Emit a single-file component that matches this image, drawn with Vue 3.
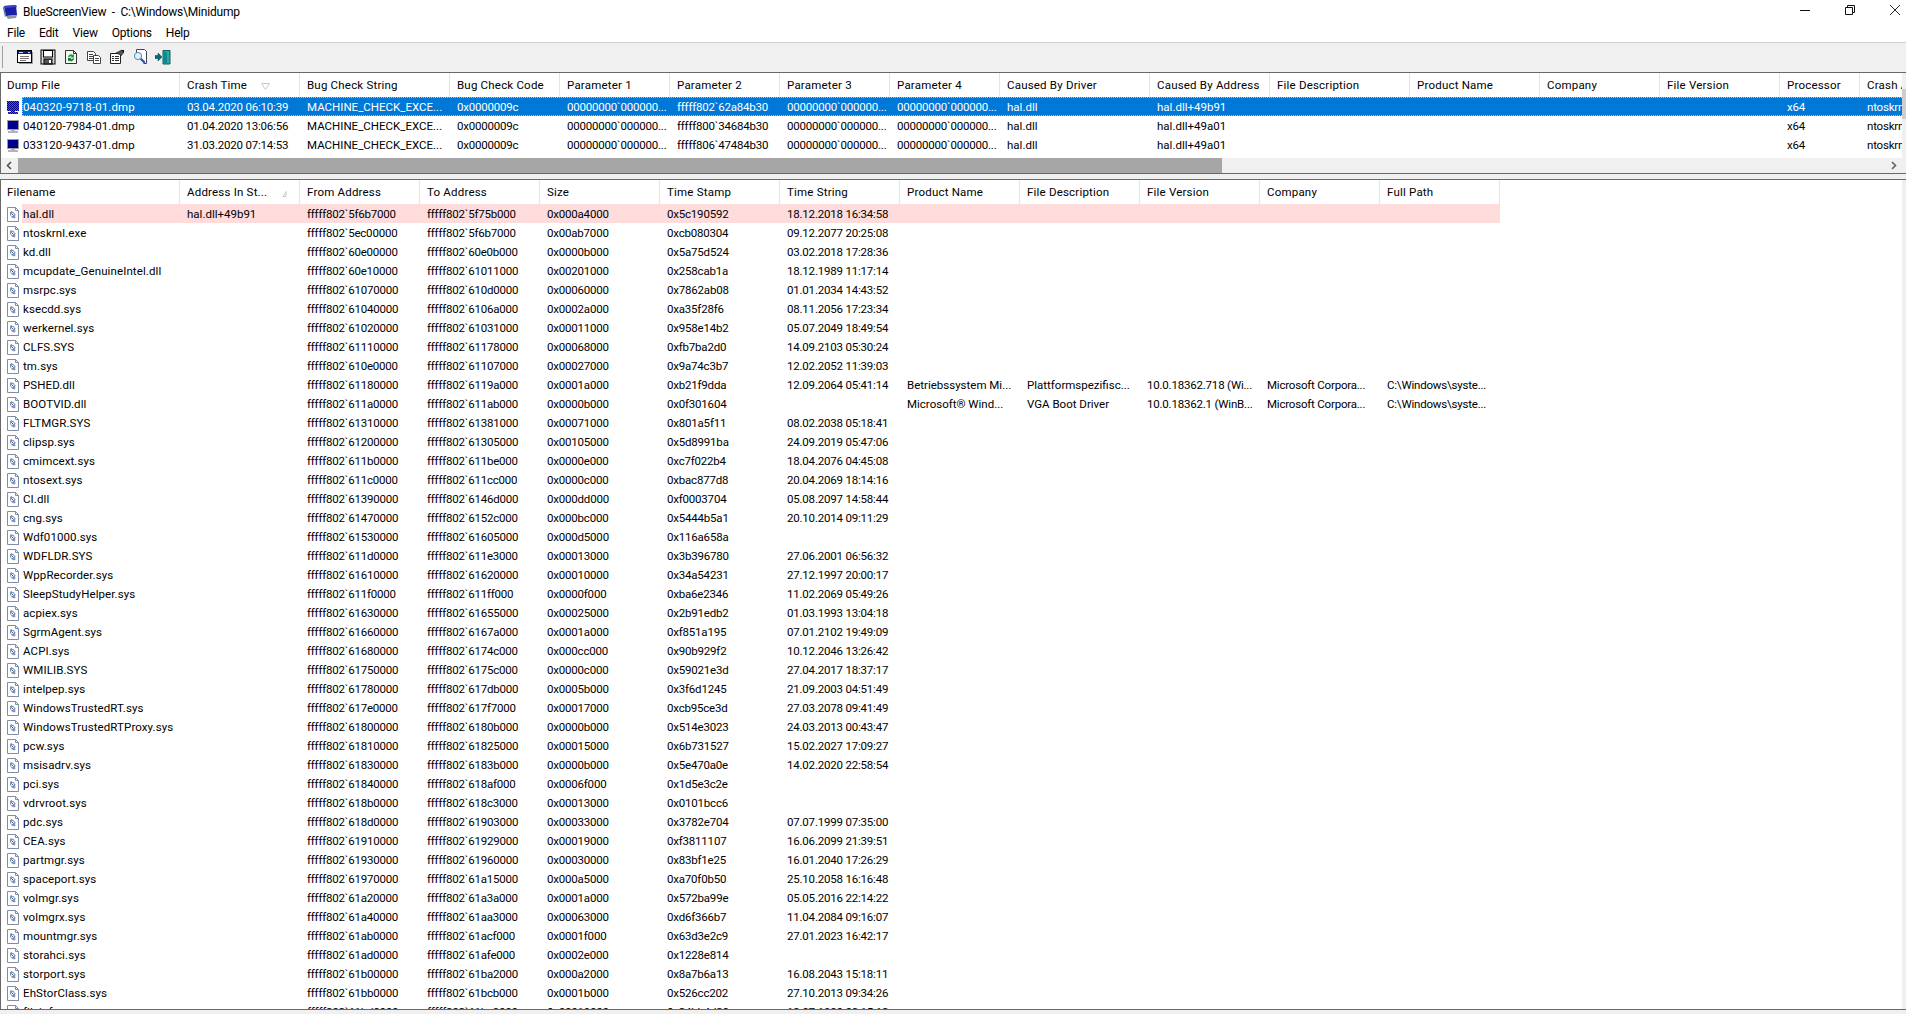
<script setup>
const topCols = ['Dump File','Crash Time','Bug Check String','Bug Check Code','Parameter 1','Parameter 2','Parameter 3','Parameter 4','Caused By Driver','Caused By Address','File Description','Product Name','Company','File Version','Processor','Crash Address']
const botCols = ['Filename','Address In St...','From Address','To Address','Size','Time Stamp','Time String','Product Name','File Description','File Version','Company','Full Path']
const P = '00000000`000000...'
const dumps = [
  ['040320-9718-01.dmp','03.04.2020 06:10:39','fffff802`62a84b30','hal.dll+49b91'],
  ['040120-7984-01.dmp','01.04.2020 13:06:56','fffff800`34684b30','hal.dll+49a01'],
  ['033120-9437-01.dmp','31.03.2020 07:14:53','fffff806`47484b30','hal.dll+49a01'],
].map(d => [d[0],d[1],'MACHINE_CHECK_EXCE...','0x0000009c',P,d[2],P,P,'hal.dll',d[3],'','','','','x64','ntoskrnl.exe+1c1510'])
const raw = `hal.dll|5f6b7000|5f75b000|0x000a4000|0x5c190592|18.12.2018 16:34:58
ntoskrnl.exe|5ec00000|5f6b7000|0x00ab7000|0xcb080304|09.12.2077 20:25:08
kd.dll|60e00000|60e0b000|0x0000b000|0x5a75d524|03.02.2018 17:28:36
mcupdate_GenuineIntel.dll|60e10000|61011000|0x00201000|0x258cab1a|18.12.1989 11:17:14
msrpc.sys|61070000|610d0000|0x00060000|0x7862ab08|01.01.2034 14:43:52
ksecdd.sys|61040000|6106a000|0x0002a000|0xa35f28f6|08.11.2056 17:23:34
werkernel.sys|61020000|61031000|0x00011000|0x958e14b2|05.07.2049 18:49:54
CLFS.SYS|61110000|61178000|0x00068000|0xfb7ba2d0|14.09.2103 05:30:24
tm.sys|610e0000|61107000|0x00027000|0x9a74c3b7|12.02.2052 11:39:03
PSHED.dll|61180000|6119a000|0x0001a000|0xb21f9dda|12.09.2064 05:41:14|Betriebssystem Mi...|Plattformspezifisc...|10.0.18362.718 (Wi...|Microsoft Corpora...|C:\\Windows\\syste...
BOOTVID.dll|611a0000|611ab000|0x0000b000|0x0f301604||Microsoft® Wind...|VGA Boot Driver|10.0.18362.1 (WinB...|Microsoft Corpora...|C:\\Windows\\syste...
FLTMGR.SYS|61310000|61381000|0x00071000|0x801a5f11|08.02.2038 05:18:41
clipsp.sys|61200000|61305000|0x00105000|0x5d8991ba|24.09.2019 05:47:06
cmimcext.sys|611b0000|611be000|0x0000e000|0xc7f022b4|18.04.2076 04:45:08
ntosext.sys|611c0000|611cc000|0x0000c000|0xbac877d8|20.04.2069 18:14:16
CI.dll|61390000|6146d000|0x000dd000|0xf0003704|05.08.2097 14:58:44
cng.sys|61470000|6152c000|0x000bc000|0x5444b5a1|20.10.2014 09:11:29
Wdf01000.sys|61530000|61605000|0x000d5000|0x116a658a|
WDFLDR.SYS|611d0000|611e3000|0x00013000|0x3b396780|27.06.2001 06:56:32
WppRecorder.sys|61610000|61620000|0x00010000|0x34a54231|27.12.1997 20:00:17
SleepStudyHelper.sys|611f0000|611ff000|0x0000f000|0xba6e2346|11.02.2069 05:49:26
acpiex.sys|61630000|61655000|0x00025000|0x2b91edb2|01.03.1993 13:04:18
SgrmAgent.sys|61660000|6167a000|0x0001a000|0xf851a195|07.01.2102 19:49:09
ACPI.sys|61680000|6174c000|0x000cc000|0x90b929f2|10.12.2046 13:26:42
WMILIB.SYS|61750000|6175c000|0x0000c000|0x59021e3d|27.04.2017 18:37:17
intelpep.sys|61780000|617db000|0x0005b000|0x3f6d1245|21.09.2003 04:51:49
WindowsTrustedRT.sys|617e0000|617f7000|0x00017000|0xcb95ce3d|27.03.2078 09:41:49
WindowsTrustedRTProxy.sys|61800000|6180b000|0x0000b000|0x514e3023|24.03.2013 00:43:47
pcw.sys|61810000|61825000|0x00015000|0x6b731527|15.02.2027 17:09:27
msisadrv.sys|61830000|6183b000|0x0000b000|0x5e470a0e|14.02.2020 22:58:54
pci.sys|61840000|618af000|0x0006f000|0x1d5e3c2e|
vdrvroot.sys|618b0000|618c3000|0x00013000|0x0101bcc6|
pdc.sys|618d0000|61903000|0x00033000|0x3782e704|07.07.1999 07:35:00
CEA.sys|61910000|61929000|0x00019000|0xf3811107|16.06.2099 21:39:51
partmgr.sys|61930000|61960000|0x00030000|0x83bf1e25|16.01.2040 17:26:29
spaceport.sys|61970000|61a15000|0x000a5000|0xa70f0b50|25.10.2058 16:16:48
volmgr.sys|61a20000|61a3a000|0x0001a000|0x572ba99e|05.05.2016 22:14:22
volmgrx.sys|61a40000|61aa3000|0x00063000|0xd6f366b7|11.04.2084 09:16:07
mountmgr.sys|61ab0000|61acf000|0x0001f000|0x63d3e2c9|27.01.2023 16:42:17
storahci.sys|61ad0000|61afe000|0x0002e000|0x1228e814|
storport.sys|61b00000|61ba2000|0x000a2000|0x8a7b6a13|16.08.2043 15:18:11
EhStorClass.sys|61bb0000|61bcb000|0x0001b000|0x526cc202|27.10.2013 09:34:26
fileinfo.sys|61bd0000|61be9000|0x00019000|0x34bb4d30|13.07.1980 02:15:12`
const modules = raw.split('\n').map((line, i) => {
  const f = line.split('|')
  return [f[0], i === 0 ? 'hal.dll+49b91' : '', 'fffff802`' + f[1], 'fffff802`' + f[2], f[3], f[4], f[5] || '', f[6] || '', f[7] || '', f[8] || '', f[9] || '', f[10] || '']
})
</script>

<template>
  <div class="app">
    <header class="title">
      <svg class="appicon" width="15" height="15" viewBox="0 0 15 15">
        <path d="M1 1 L13 0 L14 10 L3 11 Z" fill="#1a1fa8" />
        <path d="M1 1 L13 0 L14 2 L2 3 Z" fill="#3b44c9" />
        <path d="M3 11 L14 10 L13 13 L5 14 Z" fill="#8f93a8" />
        <path d="M0 3 L1 1 L3 11 L2 12 Z" fill="#5d6290" />
      </svg>
      <span class="title-text">BlueScreenView&nbsp; -&nbsp; C:\Windows\Minidump</span>
      <div class="winbtns">
        <svg width="10" height="10" viewBox="0 0 10 10"><path d="M0 5.500H10" stroke="#111" /></svg>
        <svg width="10" height="10" viewBox="0 0 10 10"><path d="M.5 2.500h7v7h-7zM2.500 2.500v-2h7v7h-2" fill="none" stroke="#111" /></svg>
        <svg width="10" height="10" viewBox="0 0 10 10"><path d="M0 0L10 10M10 0L0 10" stroke="#111" stroke-width=".9" /></svg>
      </div>
    </header>
    <nav class="menu">
      <span>File</span><span>Edit</span><span>View</span><span>Options</span><span>Help</span>
    </nav>
    <div class="toolbar">
      <i class="grip"></i>
      <svg width="16" height="16" viewBox="0 0 16 16">
        <rect x=".5" y="1.500" width="14" height="12" fill="#fff" stroke="#000" />
        <rect x="1" y="2" width="13" height="3" fill="#0a1f7a" />
        <path d="M2 3.500h4M11 3.500h2" stroke="#cfd6ff" />
        <path d="M3 7.500h9M3 9.500h9M3 11.500h6" stroke="#777" />
        <path d="M15.500 3v11.500H2" stroke="#999" fill="none" />
      </svg>
      <svg width="16" height="16" viewBox="0 0 16 16">
        <rect x="1" y="1" width="14" height="14" fill="#d8d8d8" stroke="#000" />
        <rect x="3.500" y="1.500" width="9" height="6.500" fill="#fff" stroke="#000" />
        <rect x="4" y="10" width="8" height="5" fill="#555" stroke="#000" />
        <rect x="9" y="11" width="2" height="3" fill="#fff" />
      </svg>
      <svg width="16" height="16" viewBox="0 0 16 16">
        <path d="M2.500 1.500h8l3 3v10h-11z" fill="#f4f8f2" stroke="#333" />
        <path d="M10.500 1.500v3h3" fill="none" stroke="#333" />
        <path d="M5 8a3 3 0 0 1 5-2l1-1v3.500H7.500l1-1a2 2 0 0 0-2.500 1z" fill="#1f9a3a" />
        <path d="M11 9.500a3 3 0 0 1-5 2l-1 1V9h3.500l-1 1a2 2 0 0 0 2.500-1z" fill="#14752a" />
      </svg>
      <svg width="16" height="16" viewBox="0 0 16 16">
        <path d="M1.500 2.500h6l2 2v7h-8z" fill="#fff" stroke="#444" />
        <path d="M3 5.500h4M3 7.500h5M3 9.500h4" stroke="#444" />
        <path d="M7.500 6.500h5l2 2v6h-7z" fill="#fff" stroke="#444" />
        <path d="M9 9.500h4M9 11.500h4" stroke="#444" />
      </svg>
      <svg width="16" height="16" viewBox="0 0 16 16">
        <path d="M1.500 4.500h10v10h-10z" fill="#fff" stroke="#222" />
        <path d="M3 7.500h2M6 7.500h4M3 9.500h2M6 9.500h4M3 11.500h2M6 11.500h4" stroke="#333" />
        <path d="M7 4L13 1l2 2-3 4-1.500-1.500z" fill="#555" stroke="#111" stroke-width=".6" />
        <path d="M12 1h3v3z" fill="#111" />
      </svg>
      <svg width="16" height="16" viewBox="0 0 16 16">
        <path d="M4.500 .5h8l2 2v12h-3" fill="#fff" stroke="#445" />
        <path d="M4.500 .5v4" stroke="#445" />
        <circle cx="6" cy="7" r="3.600" fill="#dff1fb" stroke="#5b87a8" />
        <path d="M8.800 9.800l4 4" stroke="#2b4fc7" stroke-width="2.200" />
      </svg>
      <svg width="16" height="16" viewBox="0 0 16 16">
        <path d="M8 1.500h7v13.500H8z" fill="#2aa8a8" stroke="#0d5f62" />
        <path d="M8 2l4 2v11l-4-1z" fill="#0b8a8f" />
        <path d="M0 6.500h3V4l4 4-4 4V9.500H0z" fill="#0a6a70" stroke="#053f44" stroke-width=".5" />
      </svg>
    </div>

    <section class="panel panel-top">
      <div class="pane-inner">
        <div class="list">
          <div class="head top-grid">
            <div v-for="(c, i) in topCols" :key="c" class="hcell">
              <span>{{ c }}</span>
              <svg v-if="i === 1" class="sort" width="9" height="7" viewBox="0 0 9 7"><path d="M.5.5h8L4.500 6.500z" fill="none" stroke="#c8c8c8" /></svg>
            </div>
          </div>
          <div v-for="(d, r) in dumps" :key="d[0]" class="row">
            <div class="ic">
              <svg width="13" height="15" viewBox="0 0 13 15">
                <defs>
                  <pattern id="dither" width="2" height="2" patternUnits="userSpaceOnUse">
                    <rect width="2" height="2" fill="#00008b" />
                    <rect width="1" height="1" fill="#0078d7" />
                    <rect x="1" y="1" width="1" height="1" fill="#0078d7" />
                  </pattern>
                </defs>
                <rect x="0" y="1" width="12" height="10" :fill="r === 0 ? 'url(#dither)' : '#9a9aa2'" />
                <rect x="1" y="2" width="10" height="8" :fill="r === 0 ? 'url(#dither)' : '#00008b'" />
                <path d="M4 11h4v1H4zM1 12h10v2H1z" :fill="r === 0 ? 'url(#dither)' : '#b4b4b8'" />
              </svg>
            </div>
            <div class="body top-body" :class="{ sel: r === 0 }">
              <div v-for="(v, c) in d" :key="c" class="cell">{{ v }}</div>
            </div>
          </div>
          <div class="spacer"></div>
          <div class="hscroll">
            <svg class="arr" width="17" height="15" viewBox="0 0 17 15"><path d="M10 4L6.500 7.500 10 11" fill="none" stroke="#505050" stroke-width="1.600" /></svg>
            <div class="thumb"></div>
            <div class="track"></div>
            <svg class="arr" width="17" height="15" viewBox="0 0 17 15"><path d="M7 4l3.500 3.500L7 11" fill="none" stroke="#606060" stroke-width="1.600" /></svg>
          </div>
        </div>
        <div class="vstrip"><div class="vhead"></div><div class="vthumb"></div></div>
      </div>
    </section>

    <section class="panel panel-bot">
      <div class="pane-inner">
        <div class="list">
          <div class="head bot-grid">
            <div v-for="(c, i) in botCols" :key="c" class="hcell">
              <span>{{ c }}</span>
              <svg v-if="i === 1" class="sort sort2" width="5" height="6" viewBox="0 0 5 6"><path d="M4 .5L1 5.500h3z" fill="none" stroke="#c8c8c8" /></svg>
            </div>
          </div>
          <div v-for="(m, r) in modules" :key="r" class="row">
            <div class="ic">
              <svg width="12" height="15" viewBox="0 0 12 15">
                <path d="M.5.5h8l3 3v11H.5z" fill="#fff" stroke="#7f8ea3" />
                <path d="M8.500.5v3h3" fill="none" stroke="#7f8ea3" />
                <path d="M3 5l1.500-1 1 1 1.500.2.4 1.300 1.300 1L8 9l.6 1.600L7.200 11.500 6 11 4.800 10.500 4 9 3 8z" fill="#7e93b6" />
                <circle cx="5.500" cy="7.500" r="1.500" fill="#fff" />
                <path d="M4.500 6.500l2 2" stroke="#33507e" />
              </svg>
            </div>
            <div class="body bot-body" :class="{ pink: r === 0 }">
              <div v-for="(v, c) in m" :key="c" class="cell">{{ v }}</div>
            </div>
          </div>
        </div>
        <div class="vstrip"></div>
      </div>
    </section>
    <div class="bottom"></div>
  </div>
</template>

<style>
html, body { margin: 0; padding: 0; overflow: hidden; background: #f0f0f0; }
</style>

<style scoped>
.app {
  width: 1906px;
  height: 1014px;
  display: flex;
  flex-direction: column;
  overflow: hidden;
  background: #f0f0f0;
  color: #000;
  font: 11.5px/19px Roboto, "Liberation Sans", sans-serif;
  letter-spacing: -0.2px;
}
.title {
  height: 24px;
  flex: none;
  display: flex;
  align-items: center;
  background: #fff;
}
.appicon { margin-left: 3px; margin-right: 5px; }
.title-text { font-size: 12px; }
.winbtns {
  margin-left: auto;
  display: flex;
  gap: 35px;
  padding-right: 6px;
  margin-top: -4px;
}
.menu {
  height: 18px;
  flex: none;
  display: flex;
  gap: 14px;
  padding-left: 7px;
  background: #fff;
  border-bottom: 1px solid #d0d0d0;
  font-size: 12px;
}
.toolbar {
  height: 29px;
  flex: none;
  display: flex;
  align-items: center;
  gap: 7px;
  padding-left: 2px;
  padding-bottom: 2px;
  box-sizing: border-box;
}
.grip { width: 1px; height: 22px; background: #a0a0a0; margin-right: 7px; }
.panel {
  flex: none;
  background: #fff;
  border-top: 1px solid #696969;
  border-left: 1px solid #696969;
  border-bottom: 1px solid #696969;
  overflow: hidden;
}
.panel-top { height: 100px; }
.panel-bot { height: 829px; margin-top: 5px; }
.pane-inner { display: flex; height: 100%; }
.list { flex: none; width: 1901px; overflow: hidden; background: #fff; }
.head { display: grid; height: 24px; letter-spacing: 0.2px; }
.top-grid { grid-template-columns: 179px 120px 150px 110px 110px 110px 110px 110px 150px 120px 140px 130px 120px 120px 80px 120px; }
.bot-grid { grid-template-columns: 179px repeat(11, 120px); }
.top-body { grid-template-columns: 158px 120px 150px 110px 110px 110px 110px 110px 150px 120px 140px 130px 120px 120px 80px 120px; }
.bot-body { grid-template-columns: 158px repeat(11, 120px); }
.hcell {
  display: flex;
  align-items: center;
  padding-left: 7px;
  border-right: 1px solid #e5e5e5;
  white-space: nowrap;
  overflow: hidden;
  min-width: 0;
}
.hcell:first-child { padding-left: 6px; }
.sort { margin-left: 14px; margin-top: 3px; }
.sort2 { margin-left: 15px; }
.row { display: flex; height: 19px; }
.ic { width: 21px; flex: none; padding-left: 6px; box-sizing: border-box; display: flex; align-items: flex-start; padding-top: 3px; }
.body { display: grid; flex: none; height: 19px; }
.cell { padding-left: 7px; white-space: nowrap; overflow: hidden; min-width: 0; line-height: 21px; }
.cell:first-child { padding-left: 1px; letter-spacing: 0.1px; }
.top-body .cell:nth-child(3),
.top-body .cell:nth-child(9),
.top-body .cell:nth-child(10),
.bot-body .cell:nth-child(2),
.bot-body .cell:nth-child(8),
.bot-body .cell:nth-child(9) { letter-spacing: 0; }
.sel { background: #0078d7; color: #fff; outline: 1px dotted #9bc8ee; outline-offset: -1px; min-width: 1880px; }
.pink { background: #ffdcdc; }
.spacer { height: 4px; }
.hscroll { height: 15px; display: flex; background: #f0f0f0; }
.arr { flex: none; }
.thumb { width: 1204px; flex: none; background: #a6a6a6; }
.track { flex: 1; }
.vstrip { flex: 1; background: #f0f0f0; display: flex; flex-direction: column; }
.vhead { height: 16px; flex: none; }
.vthumb { height: 30px; flex: none; background: #cdcdcd; }
.bottom { flex: 1; }
</style>
